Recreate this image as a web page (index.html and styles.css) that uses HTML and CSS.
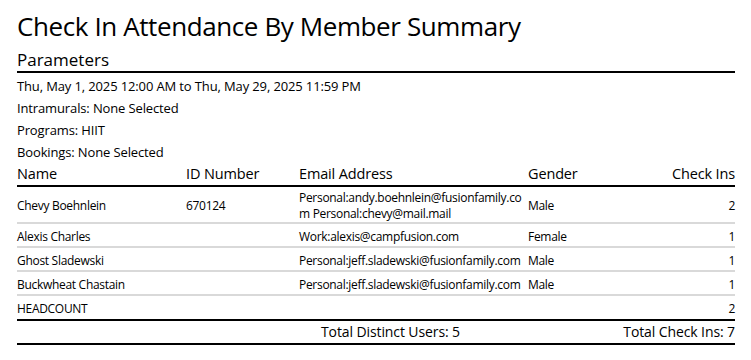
FILE: index.html
```html
<!DOCTYPE html>
<html lang="en">
<head>
<meta charset="utf-8">
<title>Check In Attendance By Member Summary</title>
<link rel="stylesheet" href="styles.css">
</head>
<body>
<div class="page">
  <h1 class="title">Check In Attendance By Member Summary</h1>
  <h2 class="section">Parameters</h2>
  <div class="params">
    <div class="param">Thu, May 1, 2025 12:00 AM to Thu, May 29, 2025 11:59 PM</div>
    <div class="param">Intramurals: None Selected</div>
    <div class="param">Programs: HIIT</div>
    <div class="param">Bookings: None Selected</div>
  </div>
  <table class="report">
    <colgroup>
      <col class="c-name"><col class="c-id"><col class="c-email"><col class="c-gender"><col class="c-count">
    </colgroup>
    <thead>
      <tr>
        <th>Name</th><th>ID Number</th><th>Email Address</th><th>Gender</th><th class="num">Check Ins</th>
      </tr>
    </thead>
    <tbody>
      <tr class="tall">
        <td>Chevy Boehnlein</td><td>670124</td><td class="email">Personal:andy.boehnlein@fusionfamily.com Personal:chevy@mail.mail</td><td>Male</td><td class="num">2</td>
      </tr>
      <tr>
        <td>Alexis Charles</td><td></td><td class="email">Work:alexis@campfusion.com</td><td>Female</td><td class="num">1</td>
      </tr>
      <tr>
        <td>Ghost Sladewski</td><td></td><td class="email">Personal:jeff.sladewski@fusionfamily.com</td><td>Male</td><td class="num">1</td>
      </tr>
      <tr>
        <td>Buckwheat Chastain</td><td></td><td class="email">Personal:jeff.sladewski@fusionfamily.com</td><td>Male</td><td class="num">1</td>
      </tr>
      <tr class="headcount">
        <td>HEADCOUNT</td><td></td><td></td><td></td><td class="num">2</td>
      </tr>
    </tbody>
  </table>
  <div class="totals">
    <div class="total-users">Total Distinct Users: 5</div>
    <div class="total-checkins">Total Check Ins: 7</div>
  </div>
</div>
</body>
</html>
```

FILE: styles.css
```css
html, body {
  margin: 0;
  padding: 0;
  background: #ffffff;
}

.page {
  padding: 8px 16px 0 17px;
  font-family: "Open Sans", "Noto Sans", "Liberation Sans", sans-serif;
  color: #000000;
}

.title {
  margin: 0 0 5px 0;
  font-size: 26px;
  font-weight: 400;
  line-height: 36px;
  letter-spacing: -0.4px;
}

.section {
  margin: 0;
  font-size: 17px;
  font-weight: 400;
  line-height: 22px;
  border-bottom: 2px solid #000000;
}

.params {
  padding-top: 2px;
}

.param {
  font-size: 13px;
  line-height: 22px;
  letter-spacing: -0.13px;
}

.report {
  width: 100%;
  border-collapse: collapse;
  table-layout: fixed;
}

.c-name { width: 169px; }
.c-id { width: 113px; }
.c-email { width: 229px; }
.c-gender { width: 112px; }

.report th {
  font-size: 14.5px;
  font-weight: 400;
  line-height: 22px;
  letter-spacing: -0.15px;
  height: 22px;
  padding: 0;
  text-align: left;
  border-bottom: 2px solid #000000;
}

.report td {
  font-size: 12px;
  line-height: 16px;
  letter-spacing: -0.3px;
  height: 19px;
  padding: 3px 0 0 0;
  vertical-align: middle;
  border-bottom: 2px solid #d9d9d9;
}

.report tr.tall td {
  height: 31px;
}

.report td.email {
  word-break: break-all;
  padding-right: 2px;
}

.report tr.headcount td {
  height: 20px;
  border-bottom: 2px solid #000000;
}

.report .num {
  text-align: right;
}

.totals {
  display: grid;
  grid-template-columns: 443px 1fr;
  font-size: 14px;
  line-height: 22px;
  letter-spacing: -0.1px;
  border-bottom: 2px solid #000000;
}

.total-users,
.total-checkins {
  text-align: right;
}
```
